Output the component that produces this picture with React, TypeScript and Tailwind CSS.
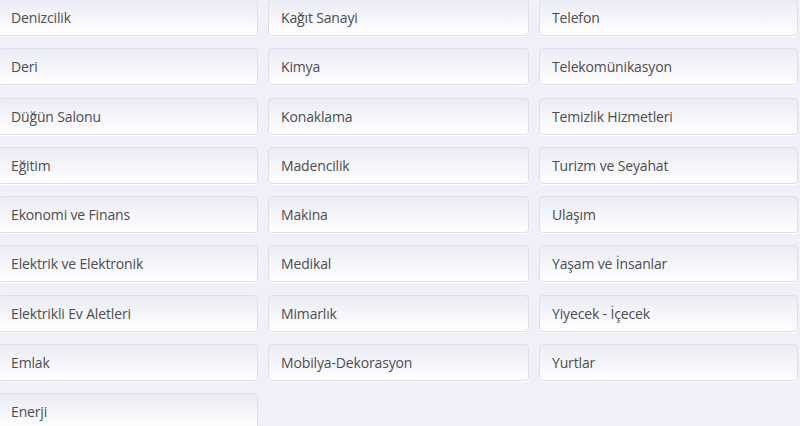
const columns: string[][] = [
  [
    "Denizcilik",
    "Deri",
    "Düğün Salonu",
    "Eğitim",
    "Ekonomi ve Finans",
    "Elektrik ve Elektronik",
    "Elektrikli Ev Aletleri",
    "Emlak",
    "Enerji",
  ],
  [
    "Kağıt Sanayi",
    "Kimya",
    "Konaklama",
    "Madencilik",
    "Makina",
    "Medikal",
    "Mimarlık",
    "Mobilya-Dekorasyon",
  ],
  [
    "Telefon",
    "Telekomünikasyon",
    "Temizlik Hizmetleri",
    "Turizm ve Seyahat",
    "Ulaşım",
    "Yaşam ve İnsanlar",
    "Yiyecek - İçecek",
    "Yurtlar",
  ],
];

const widths = ["w-[260px]", "w-[261px]", "w-[259px]"];

export default function App() {
  return (
    <div className="w-[800px] h-[426px] overflow-hidden bg-[#f0f0f8] font-['Open_Sans',sans-serif]">
      <div className="flex gap-[10px] -ml-[2px] -mt-[1px]">
        {columns.map((items, ci) => (
          <ul key={ci} className={`flex flex-col gap-[12.25px] ${widths[ci]} shrink-0`}>
            {items.map((label) => (
              <li
                key={label}
                className="h-[37px] flex items-center pl-[12px] rounded-[4px] border border-[#dfdfec] bg-gradient-to-b from-[#ebebf6] to-[#ffffff] shadow-[0_1px_0_#ffffff] text-[14px] tracking-[-0.15px] text-[#4d4d4d] cursor-pointer"
              >
                {label}
              </li>
            ))}
          </ul>
        ))}
      </div>
    </div>
  );
}
